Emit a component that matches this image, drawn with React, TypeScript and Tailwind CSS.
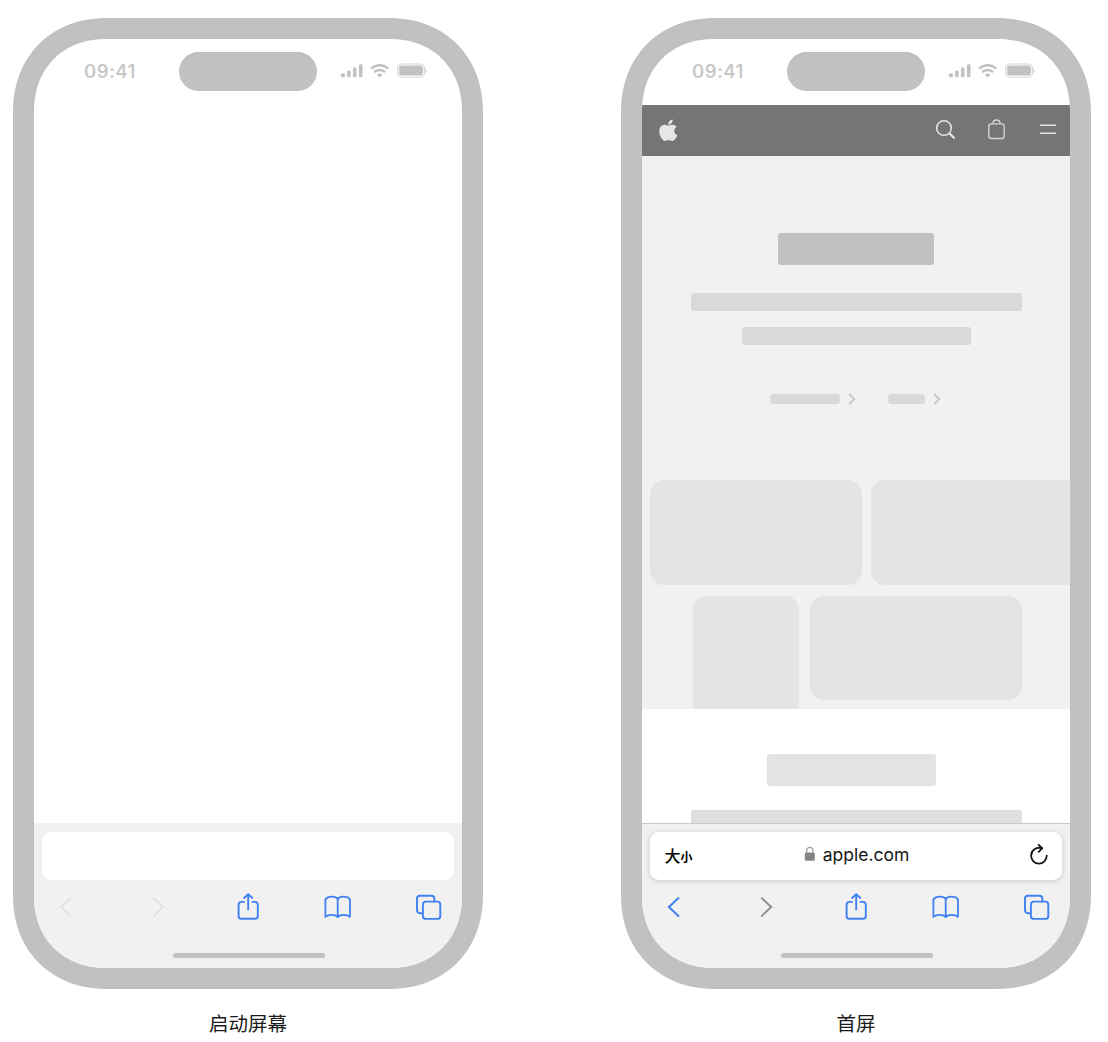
import React from "react";
import { FaApple } from "react-icons/fa";

function StatusBar() {
  return (
    <div className="flex h-[66px] shrink-0 items-start text-[#c1c1c1]">
      <div className="w-[145px] pt-[19px] pl-[50px] text-[18.5px] leading-[26px] font-semibold tracking-[0.45px] text-[#c9c9c9]">
        09:41
      </div>
      <div className="mt-[12.5px] h-[39.5px] w-[138px] rounded-full bg-[#c1c1c1]" />
      <div className="flex pt-[25px] pl-[24px]">
        <svg width="22" height="15" viewBox="0 0 22 15" fill="currentColor">
          <rect x="0" y="9.2" width="4" height="4" rx="1.3" />
          <rect x="6.1" y="6.6" width="3.6" height="6.6" rx="1.3" />
          <rect x="11.9" y="3.6" width="3.6" height="9.6" rx="1.3" />
          <rect x="17.9" y="0.3" width="3.6" height="12.9" rx="1.3" />
        </svg>
        <svg className="ml-[7px]" width="20" height="15" viewBox="0 0 20 15" fill="none" stroke="currentColor" strokeWidth="2.5">
          <path d="M1 4.7C6 0 13.2 0 18.2 4.7" />
          <path d="M4 8.2C7.2 5.2 12 5.2 15.2 8.2" />
          <path d="M9.6 13.5L6.7 10.6C8.4 9.1 10.8 9.1 12.5 10.6Z" fill="currentColor" stroke="none" />
        </svg>
        <svg className="ml-[7px] overflow-visible" width="31" height="15" viewBox="0 0 31 15" fill="none">
          <rect x="0.6" y="0" width="26.8" height="13.2" rx="4.2" stroke="#d5d5d5" strokeWidth="1.1" />
          <rect x="2.1" y="1.6" width="23.8" height="10" rx="2.8" fill="currentColor" />
          <path d="M28.6 4.3C30.2 5 30.2 8.2 28.6 8.9Z" fill="#cccccc" />
        </svg>
      </div>
    </div>
  );
}

function SiteNav() {
  return (
    <div className="flex h-[50.5px] shrink-0 items-center bg-[#757575] text-[#e6e6e6]">
      <FaApple className="mb-[1px] ml-[13.5px] h-[24.5px] w-[24.5px]" />
      <svg className="ml-auto" width="22" height="22" viewBox="0 0 22 22" fill="none" stroke="currentColor" strokeWidth="1.5">
        <circle cx="9" cy="9" r="7.3" />
        <path d="M14.3 14.3L19.6 19.5" strokeWidth="2.1" />
      </svg>
      <svg className="ml-[30px]" width="20" height="24" viewBox="0 0 20 24" fill="none" stroke="#d4d4d4" strokeWidth="1.4">
        <rect x="1.8" y="5.9" width="15.4" height="14.6" rx="2.4" />
        <path d="M5.8 5.7C6.2 0.8 12.8 0.8 13.2 5.7" />
      </svg>
      <svg className="mr-[13px] ml-[32.5px]" width="18" height="22" viewBox="0 0 18 22" stroke="currentColor" strokeWidth="1.6">
        <path d="M1 6.2H17M1 14.2H17" />
      </svg>
    </div>
  );
}

function LinkBar({ className }: { className: string }) {
  return (
    <div className="flex items-center">
      <div className={`h-[10px] rounded-[3.5px] bg-[#d9d9d9] ${className}`} />
      <svg className="ml-[8px]" width="8" height="12" viewBox="0 0 8 12" fill="none" stroke="#c6c6c6" strokeWidth="1.8">
        <path d="M1.2 1L6.2 6L1.2 11" />
      </svg>
    </div>
  );
}

function SitePage() {
  return (
    <div className="flex min-h-0 flex-1 flex-col overflow-hidden">
      <SiteNav />
      <div className="flex h-[553.5px] shrink-0 flex-col items-center overflow-hidden bg-[#f1f1f1] pt-[77px]">
        <div className="h-[32px] w-[156.5px] shrink-0 rounded-[3px] bg-[#c1c1c1]" />
        <div className="mt-[28.5px] h-[17.5px] w-[331px] shrink-0 rounded-[3px] bg-[#d9d9d9]" />
        <div className="mt-[16.5px] h-[17.5px] w-[229px] shrink-0 rounded-[3px] bg-[#d9d9d9]" />
        <div className="mt-[48px] mr-[1px] flex gap-[32px]">
          <LinkBar className="w-[70px]" />
          <LinkBar className="w-[37px]" />
        </div>
        <div className="mt-[75.5px] flex w-full shrink-0 gap-[8.5px] pl-[8px]">
          <div className="h-[105px] w-[212px] shrink-0 rounded-[14px] bg-[#e4e4e4]" />
          <div className="h-[105px] w-[212px] shrink-0 rounded-[14px] bg-[#e4e4e4]" />
        </div>
        <div className="mt-[11px] flex w-full shrink-0 gap-[11px] pl-[51px]">
          <div className="h-[120px] w-[106px] shrink-0 rounded-t-[14px] bg-[#e4e4e4]" />
          <div className="h-[104px] w-[211.5px] shrink-0 rounded-[14px] bg-[#e4e4e4]" />
        </div>
      </div>
      <div className="flex flex-col items-center bg-white pt-[45px]">
        <div className="mr-[9px] h-[32px] w-[169px] shrink-0 rounded-[3px] bg-[#e3e3e3]" />
        <div className="mt-[24px] h-[18px] w-[331px] shrink-0 rounded-[3px] bg-[#dfdfdf]" />
      </div>
    </div>
  );
}

function AddressContent() {
  return (
    <div className="flex w-full items-center px-[14.5px] text-[#161616]">
      <div className="flex w-[100px] items-baseline leading-none font-medium text-black">
        <span className="text-[16px]">大</span>
        <span className="text-[12px] font-bold">小</span>
      </div>
      <div className="-mt-[2px] flex flex-1 items-center justify-center pl-[1px]">
        <svg className="mr-[7px] -mt-[1px]" width="12" height="16" viewBox="0 0 12 16" fill="none">
          <rect x="0.8" y="6.6" width="10" height="8.2" rx="1.4" fill="#858585" />
          <path d="M2.7 7V4.6C2.7 0.2 8.9 0.2 8.9 4.6V7" stroke="#9c9c9c" strokeWidth="1.3" />
        </svg>
        <span className="text-[17.5px] leading-6 tracking-[0.02px]">apple.com</span>
      </div>
      <div className="-mt-[2px] flex w-[100px] justify-end">
        <svg width="18" height="22" viewBox="0 0 18 22" fill="none" stroke="currentColor" strokeWidth="1.8" strokeLinecap="round" strokeLinejoin="round">
          <path d="M12 4.2C6.5 2.4 1.1 6.4 1.1 11.7C1.1 16.1 4.6 19.6 8.9 19.6C13.2 19.6 16.7 16.1 16.7 11.7" />
          <path d="M8.7 0.9L12.2 4.4L8.7 7.9" />
        </svg>
      </div>
    </div>
  );
}

function Toolbar({ loaded }: { loaded: boolean }) {
  return (
    <div className="flex h-[55px] items-center justify-between pr-[20px] pl-[18px] text-[#3f80f2]">
      <svg width="28" height="28" viewBox="0 0 28 28" fill="none" stroke={loaded ? "currentColor" : "#e2e2e2"} strokeWidth="2">
        <path d="M19 4.5L8.9 14L19 23.5" />
      </svg>
      <svg width="28" height="28" viewBox="0 0 28 28" fill="none" stroke={loaded ? "#929292" : "#e2e2e2"} strokeWidth="2">
        <path d="M10.2 4.5L20.2 14L10.2 23.5" />
      </svg>
      <svg width="28" height="28" viewBox="0 0 28 28" fill="none" stroke="currentColor" strokeWidth="1.9" strokeLinejoin="round">
        <path d="M11.7 8.9H8.5Q5.6 8.9 5.6 11.8V22.9Q5.6 25.8 8.5 25.8H21.9Q24.8 25.8 24.8 22.9V11.8Q24.8 8.9 21.9 8.9H18.7" />
        <path d="M15.2 17.2V1.2M10.6 5.5L15.2 1.1L19.8 5.5" />
      </svg>
      <svg width="28" height="28" viewBox="0 0 28 28" fill="none" stroke="currentColor" strokeWidth="1.8" strokeLinejoin="round">
        <path d="M13.7 24V6C11.6 2.9 4.1 2.9 1.4 6.4V23.8C4.5 21.4 10.8 21 13.7 24C16.6 21 22.9 21.4 26 23.8V6.4C23.3 2.9 15.8 2.9 13.7 6" />
      </svg>
      <svg width="28" height="28" viewBox="0 0 28 28" fill="none" stroke="currentColor" strokeWidth="1.9">
        <path d="M8.9 20.2H6Q3 20.2 3 17.2V5.8Q3 2.8 6 2.8H17.4Q20.4 2.8 20.4 5.8V8.6" />
        <rect x="8.9" y="8.6" width="17.4" height="17.3" rx="3" />
      </svg>
    </div>
  );
}

function Phone({ caption, loaded }: { caption: string; loaded: boolean }) {
  return (
    <figure className="flex w-[470px] flex-col items-center">
      <div className="h-[971px] w-[470px] rounded-[88px] bg-[#c1c1c1] p-[21px] [corner-shape:superellipse(1.1)] supports-[corner-shape:squircle]:rounded-[94px]">
        <div className="flex h-[929px] flex-col overflow-hidden rounded-[67px] bg-white [corner-shape:superellipse(1.1)] supports-[corner-shape:squircle]:rounded-[72px]">
          <StatusBar />
          {loaded ? <SitePage /> : <div className="flex-1" />}
          <div className={`h-[145.5px] shrink-0 border-t bg-[#f1f1f1] px-0 pt-[8px] ${loaded ? "border-[#c9c9c9]" : "border-[#f1f1f1]"}`}>
            <div className={`mx-[8px] flex h-[48px] items-center rounded-[9px] bg-white ${loaded ? "shadow-[0_1px_6px_rgba(0,0,0,0.16)]" : ""}`}>
              {loaded && <AddressContent />}
            </div>
            <Toolbar loaded={loaded} />
            <div className="mt-[18.5px] ml-[139px] h-[5px] w-[152px] rounded-full bg-[#c1c1c1]" />
          </div>
        </div>
      </div>
      <figcaption className="mt-[19.5px] text-[19.5px] leading-[30px] text-[#1b1b1b]">{caption}</figcaption>
    </figure>
  );
}

export default function App() {
  return (
    <main className="flex h-[1042px] w-[1108px] gap-[138px] overflow-hidden bg-white pt-[18px] pl-[13px] font-['Inter','Noto_Sans_CJK_SC',sans-serif]">
      <Phone caption="启动屏幕" loaded={false} />
      <Phone caption="首屏" loaded />
    </main>
  );
}
